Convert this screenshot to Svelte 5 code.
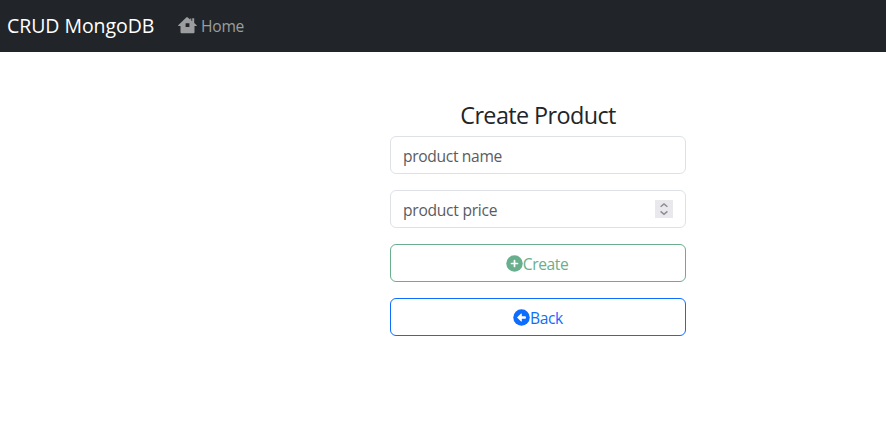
<script>
  let name = $state('');
  let price = $state('');
</script>

<nav>
  <a class="brand" href="#home">CRUD MongoDB</a>
  <a class="link" href="#home">
    <svg class="home" width="19" height="17" viewBox="0 0 19 17" fill="currentColor" aria-hidden="true">
      <path fill-rule="evenodd" d="M9.5.3 12.2 2.6V1.5H13.3V3.4L14.2 4.2V1.2H16.2V6L18.7 8.2V9H16.5V15.2Q16.5 16.2 15.5 16.2H3.5Q2.5 16.2 2.5 15.2V9H.2V8.2L8.5.3Q9 0 9.5.3ZM7.6 6.3V10.1H11.4V6.3Z" />
    </svg>
    <span>Home</span>
  </a>
</nav>

<main>
  <form onsubmit={(e) => e.preventDefault()}>
    <h1>Create Product</h1>
    <input class="control name" placeholder="product name" bind:value={name} />
    <div class="control number">
      <input class="price" inputmode="numeric" placeholder="product price" bind:value={price} />
      <svg class="spinner" width="18" height="18" viewBox="0 0 18 18" aria-hidden="true">
        <rect width="18" height="18" fill="#e9e9ed" />
        <path d="M5.6 6.8 9 3.9 12.4 6.8M5.6 11.4 9 14.3 12.4 11.4" fill="none" stroke="#8c8c92" stroke-width="1.5" />
      </svg>
    </div>
    <button class="create" disabled>
      <svg width="17" height="17" viewBox="0 0 17 17" aria-hidden="true">
        <circle cx="8.5" cy="8.5" r="8.25" fill="currentColor" />
        <path d="M8.5 5.5V11.5M5.5 8.5H11.5" stroke="#fff" stroke-width="1.7" stroke-linecap="round" />
      </svg><span>Create</span>
    </button>
    <button class="back" type="button">
      <svg width="17" height="17" viewBox="0 0 17 17" aria-hidden="true">
        <circle cx="8.5" cy="8.5" r="8.25" fill="currentColor" />
        <path d="M4 8.5 8.1 4.5Q8.8 4.1 8.8 5V7.2H12.2Q12.9 7.2 12.9 7.9V9.1Q12.9 9.8 12.2 9.8H8.8V12Q8.8 12.9 8.1 12.5Z" fill="#fff" />
      </svg><span>Back</span>
    </button>
  </form>
</main>

<style>
  :global(body) {
    margin: 0;
    background: #fff;
    color: #212529;
    font: 16px/24px "Open Sans", "Noto Sans", sans-serif;
  }
  nav {
    display: flex;
    align-items: center;
    box-sizing: border-box;
    height: 52px;
    padding-left: 7px;
    background: #212529;
  }
  a {
    text-decoration: none;
    white-space: nowrap;
  }
  .brand {
    width: 171px;
    color: #fff;
    font-size: 19.5px;
    letter-spacing: -0.06px;
  }
  .link {
    display: flex;
    align-items: center;
    gap: 4px;
    color: #9b9d9e;
    font-size: 15.6px;
    letter-spacing: -0.25px;
  }
  .link span {
    margin-top: -1px;
  }
  .home {
    margin-top: -2px;
  }
  form {
    display: flex;
    flex-direction: column;
    width: 296px;
    margin: 49px 0 0 390px;
  }
  h1 {
    margin: 0 0 6px;
    font-size: 23.4px;
    font-weight: 400;
    line-height: 29px;
    text-align: center;
    white-space: nowrap;
    letter-spacing: -0.6px;
  }
  input {
    font: inherit;
    font-size: 15.6px;
    letter-spacing: -0.33px;
    color: #212529;
  }
  input::placeholder {
    color: #595c5f;
    opacity: 1;
  }
  .control {
    box-sizing: border-box;
    height: 38px;
    margin: 0 0 16px;
    padding: 2px 12px 0;
    border: 1px solid #dee2e6;
    border-radius: 6px;
    background: #fff;
  }
  .number {
    display: flex;
    align-items: center;
  }
  .price {
    flex: 1;
    min-width: 0;
    padding: 0;
    border: 0;
    outline: 0;
    letter-spacing: -0.26px;
  }
  .spinner {
    margin-top: -2px;
  }
  button {
    display: flex;
    align-items: center;
    justify-content: center;
    box-sizing: border-box;
    height: 38px;
    margin: 0 0 16px;
    padding: 2px 0 0;
    border: 1px solid currentColor;
    border-radius: 6px;
    background: #fff;
    font: inherit;
    font-size: 15.6px;
    letter-spacing: -0.4px;
  }
  button svg {
    margin-top: -2px;
  }
  .create {
    padding-right: 2px;
    color: #69af8d;
  }
  .back {
    color: #0d6efd;
  }
</style>
